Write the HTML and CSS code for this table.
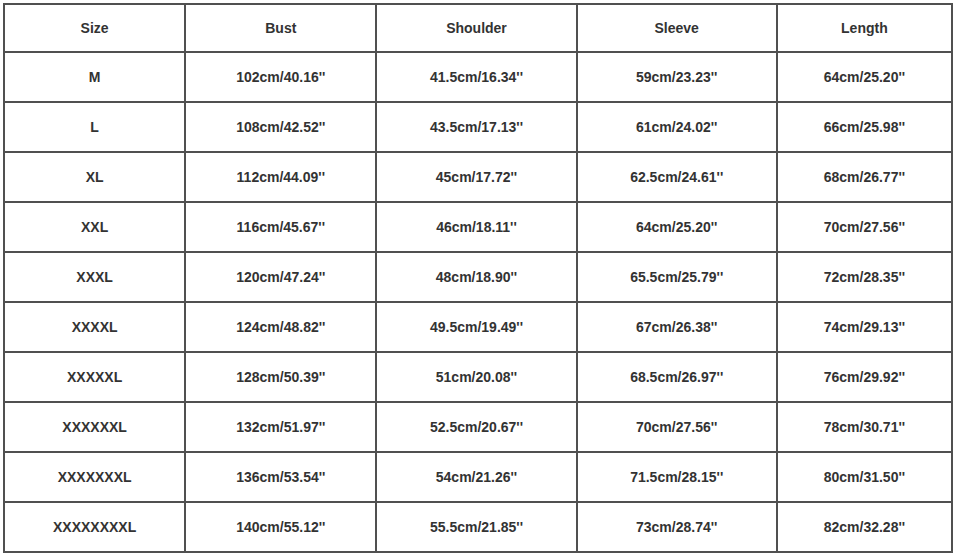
FILE: index.html
```html
<!DOCTYPE html>
<html>
<head>
<meta charset="utf-8">
<link rel="stylesheet" href="styles.css">
</head>
<body>
<table class="size-table">
  <colgroup>
    <col class="c1"><col class="c2"><col class="c3"><col class="c4"><col class="c5">
  </colgroup>
  <thead>
    <tr class="head"><th>Size</th><th>Bust</th><th>Shoulder</th><th>Sleeve</th><th>Length</th></tr>
  </thead>
  <tbody>
    <tr><td>M</td><td>102cm/40.16''</td><td>41.5cm/16.34''</td><td>59cm/23.23''</td><td>64cm/25.20''</td></tr>
    <tr><td>L</td><td>108cm/42.52''</td><td>43.5cm/17.13''</td><td>61cm/24.02''</td><td>66cm/25.98''</td></tr>
    <tr><td>XL</td><td>112cm/44.09''</td><td>45cm/17.72''</td><td>62.5cm/24.61''</td><td>68cm/26.77''</td></tr>
    <tr><td>XXL</td><td>116cm/45.67''</td><td>46cm/18.11''</td><td>64cm/25.20''</td><td>70cm/27.56''</td></tr>
    <tr><td>XXXL</td><td>120cm/47.24''</td><td>48cm/18.90''</td><td>65.5cm/25.79''</td><td>72cm/28.35''</td></tr>
    <tr><td>XXXXL</td><td>124cm/48.82''</td><td>49.5cm/19.49''</td><td>67cm/26.38''</td><td>74cm/29.13''</td></tr>
    <tr><td>XXXXXL</td><td>128cm/50.39''</td><td>51cm/20.08''</td><td>68.5cm/26.97''</td><td>76cm/29.92''</td></tr>
    <tr><td>XXXXXXL</td><td>132cm/51.97''</td><td>52.5cm/20.67''</td><td>70cm/27.56''</td><td>78cm/30.71''</td></tr>
    <tr><td>XXXXXXXL</td><td>136cm/53.54''</td><td>54cm/21.26''</td><td>71.5cm/28.15''</td><td>80cm/31.50''</td></tr>
    <tr><td>XXXXXXXXL</td><td>140cm/55.12''</td><td>55.5cm/21.85''</td><td>73cm/28.74''</td><td>82cm/32.28''</td></tr>
  </tbody>
</table>
</body>
</html>
```
FILE: styles.css
```css
html, body {
  margin: 0;
  padding: 0;
  background: #ffffff;
}
body {
  padding: 3px 0 0 3px;
}
.size-table {
  border-collapse: collapse;
  table-layout: fixed;
  width: 950px;
  font-family: "Liberation Sans", Arial, sans-serif;
  font-size: 14px;
  font-weight: bold;
  color: #333333;
}
.c1 { width: 181px; }
.c2 { width: 191px; }
.c3 { width: 200px; }
.c4 { width: 200px; }
.c5 { width: 175px; }
.size-table th,
.size-table td {
  border: 2px solid #505050;
  text-align: center;
  vertical-align: middle;
  padding: 0;
  box-sizing: border-box;
}
.size-table th {
  font-weight: bold;
  height: 48px;
}
.size-table tbody td {
  height: 50px;
}
```
